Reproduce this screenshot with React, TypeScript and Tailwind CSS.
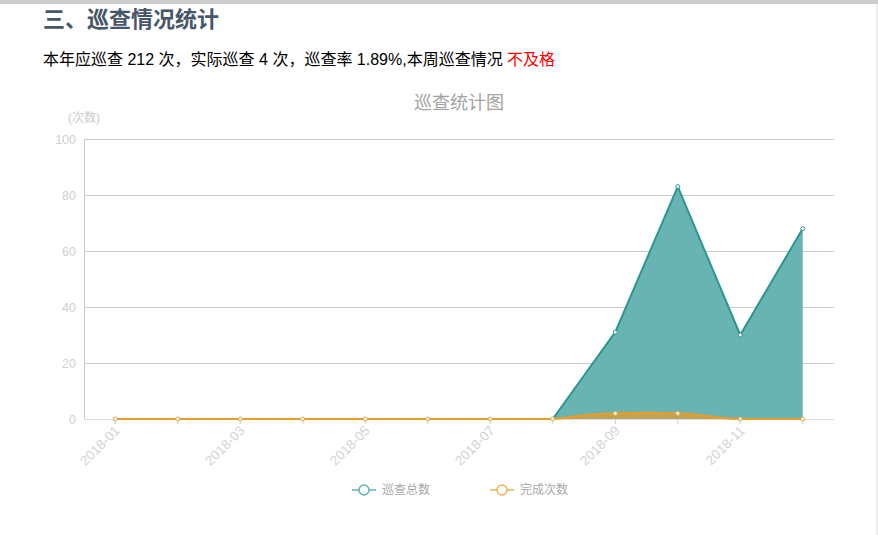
import React from "react";

const MONTHS = [
  "2018-01", "2018-02", "2018-03", "2018-04", "2018-05", "2018-06",
  "2018-07", "2018-08", "2018-09", "2018-10", "2018-11", "2018-12",
];
const TOTAL = [0, 0, 0, 0, 0, 0, 0, 0, 31, 83, 30, 68];
const DONE = [0, 0, 0, 0, 0, 0, 0, 0, 2, 2, 0, 0];

// plot box in page coordinates (svg viewBox is offset to match)
const LEFT = 84;
const RIGHT = 834;
const TOP = 139;
const BOTTOM = 419;
const STEP = (RIGHT - LEFT) / MONTHS.length;

const px = (i: number) => LEFT + STEP * (i + 0.5);
const py = (v: number) => BOTTOM - ((BOTTOM - TOP) * v) / 100;

const CHART_FONT = '"Liberation Sans", "Noto Sans CJK SC", sans-serif';

function StatsChart() {
  const teal = TOTAL.map((v, i) => `${px(i)},${py(v)}`).join(" ");
  const tealArea = `${px(0)},${BOTTOM} ${teal} ${px(11)},${BOTTOM}`;

  const y0 = py(0);
  const y2 = py(2);
  const orangeLine =
    `M${px(0)},${y0} L${px(8) - STEP},${y0} ` +
    `C${px(7) + 28},${y0 - 3} ${px(8) - 22},${y2} ${px(8)},${y2} ` +
    `C${px(8) + 22},${y2 - 0.6} ${px(9) - 22},${y2 - 0.6} ${px(9)},${y2} ` +
    `C${px(9) + 22},${y2} ${px(10) - 28},${y0} ${px(10)},${y0} L${px(11)},${y0}`;

  return (
    <svg
      width={876}
      height={430}
      viewBox="0 85 876 430"
      className="block"
      style={{ fontFamily: CHART_FONT }}
    >
      <text x={459} y={109} textAnchor="middle" fontSize={18} fill="#a3a3a3">
        巡查统计图
      </text>
      <text x={84} y={122} textAnchor="middle" fontSize={12} fill="#cccccc">
        (次数)
      </text>

      {[0, 20, 40, 60, 80, 100].map((v) => (
        <g key={v}>
          <line
            x1={LEFT}
            x2={RIGHT}
            y1={py(v) + 0.5}
            y2={py(v) + 0.5}
            stroke={v === 0 ? "#dddddd" : "#cccccc"}
            strokeWidth={1}
          />
          <text
            x={76}
            y={py(v) + 4.5}
            textAnchor="end"
            fontSize={12.5}
            fill="#d0d0d0"
          >
            {v}
          </text>
        </g>
      ))}
      <line x1={LEFT + 0.5} x2={LEFT + 0.5} y1={TOP} y2={BOTTOM} stroke="#cccccc" />

      {MONTHS.map((m, i) => (
        <line
          key={m}
          x1={px(i)}
          x2={px(i)}
          y1={BOTTOM}
          y2={BOTTOM + 5}
          stroke="#cccccc"
        />
      ))}
      {MONTHS.map((m, i) =>
        i % 2 === 0 ? (
          <text
            key={m}
            x={px(i) + 2}
            y={428}
            dy="0.35em"
            textAnchor="end"
            fontSize={13.5}
            fill="#d3d3d3"
            transform={`rotate(-45 ${px(i) + 2} 428)`}
          >
            {m}
          </text>
        ) : null,
      )}

      <polygon points={tealArea} fill="#67b4b3" />
      <polyline points={teal} fill="none" stroke="#2b9690" strokeWidth={2} strokeLinejoin="round" />

      <path d={`${orangeLine} Z`} fill="#d1a044" fillOpacity={0.85} />
      <path d={orangeLine} fill="none" stroke="#e89c2c" strokeWidth={2.2} />

      {TOTAL.map((v, i) =>
        v > 0 ? (
          <circle key={i} cx={px(i)} cy={py(v)} r={2} fill="#ffffff" stroke="#2b9690" strokeWidth={1} />
        ) : null,
      )}
      {DONE.map((v, i) => (
        <circle key={i} cx={px(i)} cy={py(v)} r={2} fill="#ffffff" stroke="#e0a93e" strokeWidth={1} />
      ))}

      {/* legend */}
      <g>
        <line x1={352} x2={376} y1={490} y2={490} stroke="#5db5b0" strokeWidth={1.5} />
        <circle cx={364} cy={490} r={5} fill="#ffffff" stroke="#5db5b0" strokeWidth={1.5} />
        <text x={382} y={494} fontSize={12} fill="#a8a8a8">
          巡查总数
        </text>
        <line x1={490} x2={514} y1={490} y2={490} stroke="#f1b24f" strokeWidth={1.5} />
        <circle cx={502} cy={490} r={5} fill="#ffffff" stroke="#f1b24f" strokeWidth={1.5} />
        <text x={520} y={494} fontSize={12} fill="#a8a8a8">
          完成次数
        </text>
      </g>
    </svg>
  );
}

export default function App() {
  return (
    <div className="flex h-[535px] w-[878px] flex-col overflow-hidden bg-white">
      <div className="h-1 w-full bg-[#cccccc]" />
      <div className="flex min-h-0 flex-1">
        <main className="min-w-0 flex-1">
          <h3 className="pl-[43px] font-['Noto_Sans_CJK_SC',sans-serif] text-[22px] leading-[26px] font-bold text-[#475669]">
            三、巡查情况统计
          </h3>
          <p className="mt-[18px] pl-[43px] font-['Liberation_Sans','Noto_Sans_CJK_SC',sans-serif] text-[16px] leading-6 text-black">
            本年应巡查 212 次，实际巡查 4 次，巡查率 1.89%,本周巡查情况{" "}
            <span className="text-[#ff0000]">不及格</span>
          </p>
          <div className="mt-[13px]">
            <StatsChart />
          </div>
        </main>
        <div className="w-[2px] bg-[#eeeeee]" />
      </div>
    </div>
  );
}
